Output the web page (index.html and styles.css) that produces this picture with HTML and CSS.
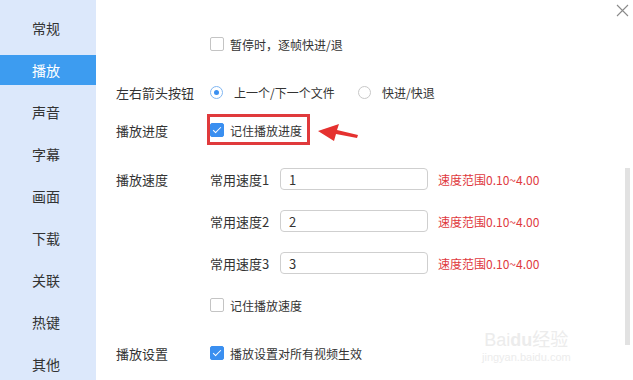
FILE: index.html
```html
<!DOCTYPE html>
<html>
<head>
    <meta charset="UTF-8" />
    <title>播放设置</title>
    <link rel="stylesheet" href="styles.css">
</head>
<body>
    <div class="app">
        <!-- 左侧导航 -->
        <ul class="side">
            <li class="side-item">常规</li>
            <li class="side-item active">播放</li>
            <li class="side-item">声音</li>
            <li class="side-item">字幕</li>
            <li class="side-item">画面</li>
            <li class="side-item">下载</li>
            <li class="side-item">关联</li>
            <li class="side-item">热键</li>
            <li class="side-item">其他</li>
        </ul>

        <div class="main">
            <div class="row r1">
                <span class="label"></span>
                <label class="check"><span class="box"></span>暂停时，逐帧快进/退</label>
            </div>

            <div class="row r2">
                <span class="label">左右箭头按钮</span>
                <label class="radio first"><span class="dot on"></span>上一个/下一个文件</label>
                <label class="radio"><span class="dot"></span>快进/快退</label>
            </div>

            <div class="row r3">
                <span class="label">播放进度</span>
                <label class="check"><span class="box on"></span>记住播放进度</label>
            </div>

            <div class="row r4">
                <span class="label">播放速度</span>
                <span class="speed-name">常用速度1</span>
                <input class="speed-input" type="text" value="1">
                <span class="tip">速度范围0.10~4.00</span>
            </div>
            <div class="row r5">
                <span class="label"></span>
                <span class="speed-name">常用速度2</span>
                <input class="speed-input" type="text" value="2">
                <span class="tip">速度范围0.10~4.00</span>
            </div>
            <div class="row r5">
                <span class="label"></span>
                <span class="speed-name">常用速度3</span>
                <input class="speed-input" type="text" value="3">
                <span class="tip">速度范围0.10~4.00</span>
            </div>
            <div class="row r5">
                <span class="label"></span>
                <label class="check"><span class="box"></span>记住播放速度</label>
            </div>

            <div class="row r6">
                <span class="label">播放设置</span>
                <label class="check"><span class="box on"></span>播放设置对所有视频生效</label>
            </div>

            <!-- 关闭按钮 -->
            <svg class="close" width="13" height="13" viewBox="0 0 13 13">
                <path d="M1 1L12 12M12 1L1 12" stroke="#8a8a8a" stroke-width="1.1" fill="none"/>
            </svg>

            <!-- 标注：红框和箭头 -->
            <div class="mark"></div>
            <svg class="arrow" width="44" height="20" viewBox="0 0 44 20">
                <polygon points="1,8 22,1 20,7 41,12 40,15 19,11 17,18" fill="#e5312f"/>
            </svg>

            <!-- 水印 -->
            <div class="watermark">
                <span class="wm-big">Bai<b>du</b>经验</span>
                <span class="wm-small">jingyan.baidu.com</span>
            </div>

            <div class="scrollbar"></div>
        </div>
    </div>
</body>
</html>
```

FILE: styles.css
```css
*{
    margin: 0;
    padding: 0;
    box-sizing: border-box;
}

body{
    width: 633px;
    height: 380px;
    overflow: hidden;
    background-color: #fff;
    font-family: "Noto Sans CJK SC", "Liberation Sans", sans-serif;
    color: #333;
}

.app{
    display: flex;
    height: 380px;
}

/* 左侧导航 */
.side{
    list-style: none;
    width: 96px;
    flex-shrink: 0;
    background-color: #dce8fb;
    padding-top: 13px;
}

.side-item{
    height: 30px;
    line-height: 30px;
    padding-left: 32px;
    margin-bottom: 12px;
    font-size: 14px;
    color: #333;
}

.side-item.active{
    background-color: #3d9cf0;
    color: #fff;
}

/* 右侧内容 */
.main{
    flex: 1;
    position: relative;
    padding-left: 20px;
}

.row{
    display: flex;
    align-items: center;
    height: 24px;
    font-size: 12px;
}

.r1{ margin-top: 32px; }
.r2{ margin-top: 24px; }
.r3{ margin-top: 14px; }
.r4{ margin-top: 25px; }
.r5{ margin-top: 18px; }
.r6{ margin-top: 24px; }

.label{
    width: 94px;
    flex-shrink: 0;
    font-size: 13px;
}

.check{
    display: flex;
    align-items: center;
}

.box{
    width: 14px;
    height: 14px;
    border: 1px solid #c4c4c4;
    border-radius: 2px;
    margin-right: 6px;
    position: relative;
}

.box.on{
    background-color: #3a8ff0;
    border-color: #3a8ff0;
}

/* 对勾 */
.box.on::after{
    content: "";
    position: absolute;
    left: 4px;
    top: 1px;
    width: 3px;
    height: 7px;
    border-right: 1.5px solid #fff;
    border-bottom: 1.5px solid #fff;
    transform: rotate(45deg);
}

.radio{
    display: flex;
    align-items: center;
}

.radio.first{
    width: 148px;
}

.dot{
    width: 13px;
    height: 13px;
    border: 1px solid #c8c8c8;
    border-radius: 50%;
    margin-right: 11px;
    position: relative;
}

.dot.on{
    border-color: #7fb6f2;
}

.dot.on::after{
    content: "";
    position: absolute;
    left: 3px;
    top: 3px;
    width: 5px;
    height: 5px;
    border-radius: 50%;
    background-color: #3a8ff0;
}

.speed-name{
    width: 70px;
    font-size: 13px;
}

.speed-input{
    width: 148px;
    height: 22px;
    border: 1px solid #cfcfcf;
    border-radius: 4px;
    padding-left: 8px;
    font-family: "Noto Sans CJK SC", "Liberation Sans", sans-serif;
    font-size: 13px;
    color: #333;
    outline: none;
}

.tip{
    margin-left: 10px;
    color: #e0393e;
    font-size: 12px;
}

.close{
    position: absolute;
    left: 520px;
    top: 4px;
}

/* 标注 */
.mark{
    position: absolute;
    left: 111px;
    top: 114px;
    width: 103px;
    height: 31px;
    border: 3px solid #e03a3c;
}

.arrow{
    position: absolute;
    left: 221px;
    top: 123px;
}

/* 水印 很淡 */
.watermark{
    position: absolute;
    left: 386px;
    top: 330px;
    display: flex;
    flex-direction: column;
    align-items: center;
    color: #ececec;
    font-family: "Liberation Sans", "Noto Sans CJK SC", sans-serif;
}

.wm-big{
    font-size: 18px;
    line-height: 20px;
}

.wm-big b{
    font-weight: bold;
}

.wm-small{
    font-size: 11px;
    line-height: 14px;
}

.scrollbar{
    position: absolute;
    left: 529px;
    top: 168px;
    width: 5px;
    height: 177px;
    background-color: #e2e2e2;
}
```
